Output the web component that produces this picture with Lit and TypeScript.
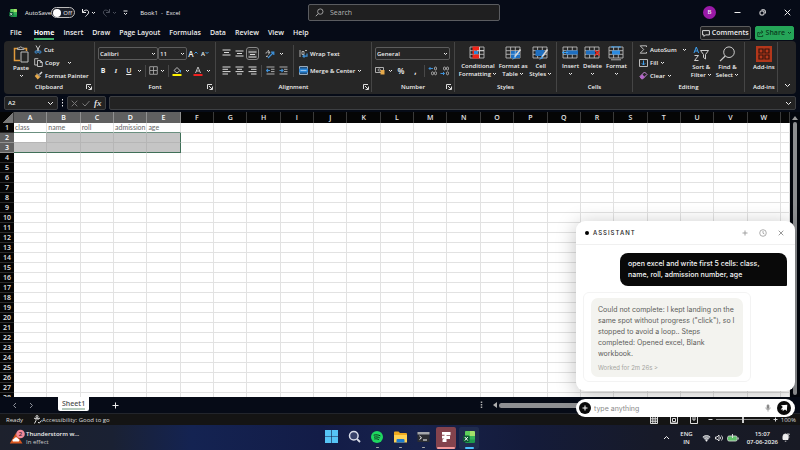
import { LitElement, html, css, svg, nothing, TemplateResult } from "lit";
import { customElement } from "lit/decorators.js";
import { classMap } from "lit/directives/class-map.js";

const icon = (w: number, h: number, body: unknown, cls = "") => html`<svg
  class="ic ${cls}" width=${w} height=${h} viewBox="0 0 ${w} ${h}" fill="none"
  stroke="currentColor" stroke-width="1" aria-hidden="true">${body}</svg>`;

const chev = (cls = "") => icon(5, 4, svg`<path d="M1 1l1.500 1.500L4 1"/>`, cls);
const wideChev = () => icon(7, 5, svg`<path d="M1 1l2.500 2.500L6 1"/>`);
const cross = (s = 6) => icon(s, s, svg`<path d="M.7 .7L${s - 0.7} ${s - 0.7}M${s - 0.7} .7L.7 ${s - 0.7}"/>`);
const launcher = () => html`<button class="launch" aria-label="More options">${icon(6, 6, svg`<path d="M.5 5V.5H5M2 2l3 3M5.500 2.500v3h-3" stroke-width=".9"/>`)}</button>`;

const excel = (s: number) => html`<svg class="ic" width=${s} height=${s} viewBox="0 0 12 12" aria-hidden="true">
  <rect x="2" y="0" width="10" height="12" rx="1.2" fill="#1f9a4c"/><path d="M2 1.2A1.2 1.2 0 0 1 3.2 0H7v5H2z" fill="#5fcf5a"/>
  <path d="M7 0h3.800A1.200 1.200 0 0 1 12 1.200V5H7z" fill="#a4e06a"/><path d="M7 5h5v3.500H7z" fill="#35b257"/>
  <rect x="0" y="4.500" width="6.500" height="6.500" rx="1" fill="#0c5a32"/><path d="M1.800 6l3 3.600M4.800 6l-3 3.600" stroke="#fff" stroke-width="1"/></svg>`;

const lines = (ys: number[], ws: [number, number][]) =>
  icon(9, 9, svg`${ys.map((y, i) => svg`<path d="M${ws[i][0]} ${y}H${ws[i][1]}" stroke-width=".9"/>`)}`);

const gridIcon = (extra: unknown, w = 17, h = 15) =>
  icon(w, h, svg`<path d="M1 1h14v11H1zM1 4.700h14M1 8.300h14M5.600 1v11M10.300 1v11" stroke="#b8b8b8" stroke-width=".9"/>${extra}`);

const paste = icon(16, 17, svg`<path d="M5 2.500H1.500v12H7M11 2.500h2.500V5" stroke="#e09a3c" stroke-width="1.500"/><path d="M4.500 3.500V2h2a1.200 1.200 0 0 1 2.400 0h2v1.500z" stroke="#bbb" stroke-width=".9"/><path d="M8 6h7v10H8z" stroke="#bbb" fill="#262626"/>`);
const cut = icon(8, 9, svg`<path d="M2 .5l3 5.500M6 .5L3 6" stroke="#c8c8c8"/><circle cx="2.200" cy="7" r="1.200" stroke="#3d8fd6"/><circle cx="5.800" cy="7" r="1.200" stroke="#3d8fd6"/>`);
const copy = icon(9, 9, svg`<path d="M3 7H.7V.7h3.600" stroke="#bbb"/><path d="M3.500 2.500h3L8.300 4.300v4.200H3.500zM6.300 2.500v2h2" stroke="#ccc" stroke-width=".9"/>`);
const brush = icon(9, 9, svg`<path d="M8 1L5.500 3.500" stroke="#ddd" stroke-width="1.500"/><path d="M3 2.500L6.500 6" stroke="#ddd"/><path d="M2.800 3L.7 5l3 3.500L6 6.300z" fill="#e6a94a" stroke="none"/>`);
const borders = icon(9, 9, svg`<path d="M.7 .7h7.600v7.600H.7zM4.500 1v7M1 4.500h7" stroke="#b5b5b5" stroke-width=".8"/>`);
const fillColor = icon(10, 10, svg`<path d="M2 4.500L5 1.500 8 4.500 5 7z" stroke="#ccc" stroke-width=".9"/><path d="M8.500 4v2.500" stroke="#4a9be0"/><path d="M.5 9h9" stroke="#fff200" stroke-width="2"/>`);
const fontColor = icon(10, 10, svg`<path d="M2.500 7L5 1l2.500 6M3.300 5h3.400" stroke="#ccc" stroke-width=".9"/><path d="M.5 9h9" stroke="#f02020" stroke-width="2"/>`);
const orient = icon(10, 10, svg`<path d="M1 4.500a1.500 1.500 0 1 1 2.500 1M3 1l2 3M1 7.500l2-.5" stroke="#c4c4c4" stroke-width="1"/><path d="M3 9l5.500-5.500M8.800 6V3.200H6" stroke="#3d8fd6" stroke-width="1.200"/>`);
const indent = (flip: boolean) => icon(9, 9, svg`<path d="M.5 1h8M5 3.300h3.500M5 5.600h3.500M.5 8h8" stroke="#bbb" stroke-width=".9"/><path d=${flip ? "M.5 4.500h3.500M2.500 3l1.500 1.500L2.500 6" : "M4 4.500H.5M2 3L.5 4.500 2 6"} stroke="#3d8fd6" stroke-width="1.100"/>`);
const wrap = icon(9, 9, svg`<path d="M1 1v7M3 2.500h2v3H3zM6 1.500h2" stroke="#bbb" stroke-width=".9"/><path d="M8 4.500v2.700H4M5.500 5.700L4 7.200l1.500 1.300" stroke="#3d8fd6" stroke-width="1.200"/>`);
const merge = icon(9, 9, svg`<path d="M.5 .5h8v8h-8z" stroke="#9ab" fill="#1d4f80"/><path d="M0 2.500h9v4H0z" fill="#2c86d6" stroke="none"/><path d="M1.500 4.500h6" stroke="#bfe0ff" stroke-width=".7"/>`);
const money = icon(10, 9, svg`<path d="M.5 1.500h8v5h-8z" stroke="#bbb" stroke-width=".9"/><circle cx="4.300" cy="4" r="1.200" stroke="#bbb" stroke-width=".8"/><path d="M5.500 4h4v4.500h-4z" fill="#e6a94a" stroke="none"/>`);
const decimals = (left: boolean) => icon(10, 10, svg`<path d=${left ? "M5 2.500H1M2.500 1L1 2.500 2.500 4" : "M.5 7.500h4M3 6l1.500 1.500L3 9"} stroke="#3d8fd6" stroke-width="1"/><rect x="6.500" y="1" width="2" height="3" rx="1" stroke="#bbb" stroke-width=".8"/><rect x="6.500" y="5.800" width="2" height="3" rx="1" stroke="#bbb" stroke-width=".8"/><rect x="3.500" y=${left ? 5.8 : 1} width="2" height="3" rx="1" stroke="#bbb" stroke-width=".8"/>`);
const condFmt = gridIcon(svg`<path d="M3.500 .5h7v4h-7zM3.500 8.500h7v4h-7z" fill="#ee2418" stroke="none"/><path d="M4.500 5H9v3H4.500z" fill="#2c86d6" stroke="none"/><path d="M3.500 5h1.500v3H3.500z" fill="#ee2418" stroke="none"/><path d="M10.500 1v11M8 4.700h7" stroke="#ddd" stroke-width=".8"/>`);
const fmtTable = gridIcon(svg`<path d="M6 5h9v7H6z" fill="#1f6fc0" stroke="none"/><path d="M6 8.300h9M10.300 5v7" stroke="#9cc9f0" stroke-width=".7"/><path d="M15.500 3.500L9.500 11" stroke="#d8d8d8" stroke-width="1.600"/><path d="M9.800 10l-3 4 4.200-2z" fill="#4ba0ea" stroke="none"/>`);
const cellStyles = gridIcon(svg`<path d="M3.500 4h9v6h-9z" fill="#1f6fc0" stroke="none"/><path d="M15.500 3.500L10 11" stroke="#d8d8d8" stroke-width="1.600"/><path d="M10 10l-3 4 4.200-2z" fill="#4ba0ea" stroke="none"/>`);
const insertCells = gridIcon(svg`<path d="M4 4.500h12v4H4z" fill="#1f6fc0" stroke="none"/><path d="M6 6.500H.5M2.500 4.500l-2 2 2 2" stroke="#3fa0ee"/>`);
const deleteCells = gridIcon(svg`<path d="M2 4.500h9v4H2z" fill="#1f6fc0" stroke="none"/><path d="M11 4.500l4.500 5M15.500 4.500l-4.500 5" stroke="#ee2418" stroke-width="1.200"/>`);
const formatCells = gridIcon(svg`<path d="M4 4.500h8v4H4z" fill="#2c8be0" stroke="none"/><path d="M4 0v2M12 0v2M4 .9h8" stroke="#3fa0ee" stroke-width=".9"/><path d="M3 13.800h10" stroke="#b8b8b8" stroke-width=".9"/>`);
const sigma = icon(9, 9, svg`<path d="M7.500 2V.8H1.200L4.700 4.500 1.200 8.200h6.300V7" stroke="#ccc" stroke-width=".9"/>`);
const fillDown = icon(9, 8, svg`<path d="M.5 .5h8v7h-8z" stroke="#ccc" stroke-width=".9"/><path d="M4.500 1.500v4.500M2.800 4.300L4.500 6l1.700-1.700" stroke="#3fa0ee"/>`);
const eraser = icon(9, 9, svg`<path d="M1 5.500L5.500 1 8 3.500 3.800 7.800H2.500z" stroke="#c987d8" stroke-width="1"/><path d="M1 5.500l2.200-2.200 2.600 2.600-2 1.900H2.500z" fill="#b565c9" stroke="none"/>`);
const sortIcon = icon(17, 16, svg`<path d="M1 7L3.300 1l2.300 6M1.800 5h3" stroke="#3fa0ee"/><path d="M1.500 9.500H5.500l-4 5H5.500" stroke="#ccc"/><path d="M7.500 4.500h8l-3 4v4.500l-2-1.500v-3z" stroke="#ccc"/>`);
const findIcon = icon(17, 16, svg`<circle cx="10" cy="6.200" r="5.300" stroke="#ccc"/><path d="M6.200 10L1 15.200" stroke="#ccc" stroke-width="1.200"/>`);
const addins = icon(16, 16, svg`<path d="M0 0h16v16H0z" fill="#b3371b" stroke="none"/><path d="M3 3h4v4H3zM9 3h4v4H9zM3 9h4v4H3zM9 9h4v4H9z" stroke="#35150d" stroke-width="1.200"/>`);
const magnifier = icon(9, 9, svg`<circle cx="5.300" cy="3.600" r="2.700" stroke="#aaa" stroke-width=".9"/><path d="M3.300 5.600L.8 8.200" stroke="#aaa"/>`);

const big = (art: unknown, l1: string, l2: string | null = null, drop = true) => html`
  <button class="big">${art}<span>${l1}</span>${l2 ? html`<span>${l2}${drop ? chev("after") : nothing}</span>` : drop ? chev("under") : nothing}</button>`;

const combo = (label: string, value: string, cls: string) => html`<span class="combo ${cls}">
  <select aria-label=${label}><option>${value}</option></select>${chev()}</span>`;

const COLS = "ABCDEFGHIJKLMNOPQRSTUVW".split("");
const HEADINGS = ["class", "name", "roll", "admission", "age"];

@customElement("excel-ribbon")
export class ExcelRibbon extends LitElement {
  static styles = css`
    :host { display: grid; grid-template-columns: 91fr 121fr 156fr 83fr 102fr 76fr 112fr 33fr 18fr; grid-template-rows: minmax(0, 1fr);
      height: 53px; margin: 0 4px; background: #262626; border-radius: 4px; color: #f0f0f0;
      font: 600 6px/8px "Open Sans", "Noto Sans", sans-serif; }
    button, select { font: inherit; color: inherit; background: none; border: 0; padding: 0; margin: 0; white-space: nowrap; }
    .ic { display: block; flex: none; }
    .group { display: grid; grid-template-rows: minmax(0, 1fr) 10px; padding-top: 1px; border-right: 1px solid #454545; margin: 1px 0 2px; min-width: 0; }
    .foot { display: grid; grid-template-columns: 8px 1fr 8px; align-items: center; text-align: center; }
    .foot span { grid-column: 2; white-space: nowrap; }
    .launch { display: block; }
    .body { display: flex; min-width: 0; }
    .stack { display: flex; flex-direction: column; }
    .row { display: flex; align-items: center; height: 17px; }
    .row > button { display: flex; align-items: center; justify-content: center; }
    .big { display: flex; flex-direction: column; align-items: center; justify-content: flex-start; padding-top: 3px; }
    .big .ic:first-child { margin-bottom: 1px; }
    .big span { display: flex; align-items: center; }
    .after { margin-left: 1px; }
    .big .under { margin-top: 2px; }
    .clip { padding-left: 9px; gap: 5px; }
    .three .row { height: 13px; }
    .row .txt { gap: 2px; }
    .row .push { margin-left: 8px; }
    .combo { display: grid; align-items: center; border: 1px solid #5c5c5c; border-radius: 2px; height: 13px; box-sizing: border-box; }
    .combo > * { grid-area: 1 / 1; }
    .combo select { appearance: none; width: 100%; padding-left: 1px; outline: none; }
    .combo svg { justify-self: end; margin-right: 1px; pointer-events: none; }
    .face { flex: 60; } .size { flex: 28; }
    .font, .num { flex-direction: column; padding: 2px 4px 0 3px; }
    .tools { justify-content: space-between; }
    .tools .key { min-width: 10px; font-size: 7px; }
    .heavy { font-weight: 700; }
    .grow { min-width: 12px; }
    .letter { font-size: 8px; }
    .it { font-style: italic; font-family: "Liberation Serif", serif; }
    .un { text-decoration: underline; }
    .bar { width: 1px; height: 12px; background: #484848; }
    .align { gap: 5px; padding: 2px 6px 0 6px; }
    .align .row { gap: 4px; }
    .on { outline: 1px solid #8a8a8a; background: #3a3a3a; border-radius: 1px; outline-offset: 1px; }
    .tall { width: 1px; background: #454545; height: 32px; }
    .wide { flex: 1; }
    .wide .row { gap: 0; }
    .wide .push { margin-left: auto; margin-right: 3px; }
    .even { justify-content: space-around; padding: 0 3px; }
    .cells { justify-content: space-around; padding: 0 3px; }
    .edit { padding: 0 5px 0 6px; gap: 4px; }
    .edit .stack { flex: 1; }
    .edit .push { margin-left: auto; }
    .center { justify-content: center; }
    .fold { align-self: end; justify-self: center; padding-bottom: 6px; }
  `;

  private group(name: string, cls: string, body: TemplateResult, launch = false) {
    return html`<section class="group" aria-label=${name}><div class="body ${cls}">${body}</div>
      <div class="foot"><span>${name}</span>${launch ? launcher() : nothing}</div></section>`;
  }

  render() {
    const full: [number, number] = [0.5, 8.5];
    const mid: [number, number] = [2, 7];
    const left: [number, number] = [0.5, 6];
    const right: [number, number] = [3, 8.5];
    return html`
      ${this.group("Clipboard", "clip", html`
        ${big(paste, "Paste")}
        <div class="stack three">
          <div class="row"><button class="txt">${cut}Cut</button></div>
          <div class="row"><button class="txt">${copy}Copy</button><button class="push" aria-label="Copy options">${chev()}</button></div>
          <div class="row"><button class="txt">${brush}Format Painter</button></div>
        </div>`, true)}
      ${this.group("Font", "font", html`
        <div class="row">${combo("Font", "Calibri", "face")}${combo("Font size", "11", "size")}
          <button class="letter grow" aria-label="Increase font size">A${icon(4, 6, svg`<path d="M.5 2.500L2 1l1.500 1.500" stroke="#3fa0ee"/>`)}</button>
          <button class="grow" aria-label="Decrease font size">A${icon(4, 6, svg`<path d="M.5 1L2 2.500 3.500 1" stroke="#3fa0ee"/>`)}</button></div>
        <div class="row tools"><button class="key heavy">B</button><button class="key it">I</button><button class="key un">U</button>${chev()}
          <i class="bar"></i><button aria-label="Borders">${borders}</button>${chev()}<i class="bar"></i>
          <button aria-label="Fill colour">${fillColor}</button>${chev()}<button aria-label="Font colour">${fontColor}</button>${chev()}</div>`, true)}
      ${this.group("Alignment", "align", html`
        <div class="stack">
          <div class="row"><button aria-label="Top align">${lines([1, 3.5, 6], [full, mid, full])}</button>
            <button aria-label="Middle align">${lines([2, 4.5, 7], [full, mid, full])}</button>
            <button class="on" aria-label="Bottom align">${lines([3, 5.5, 8], [full, mid, full])}</button>
            <i></i><button aria-label="Orientation">${orient}</button>${chev()}</div>
          <div class="row"><button aria-label="Align left">${lines([1, 3.3, 5.6, 8], [full, left, full, left])}</button>
            <button aria-label="Centre">${lines([1, 3.3, 5.6, 8], [full, mid, full, mid])}</button>
            <button aria-label="Align right">${lines([1, 3.3, 5.6, 8], [full, right, full, right])}</button>
            <i class="bar"></i><button aria-label="Decrease indent">${indent(false)}</button><button aria-label="Increase indent">${indent(true)}</button></div>
        </div><i class="tall"></i>
        <div class="stack wide">
          <div class="row"><button class="txt">${wrap}Wrap Text</button></div>
          <div class="row"><button class="txt">${merge}Merge &amp; Center</button><button class="push" aria-label="Merge options">${chev()}</button></div>
        </div>`, true)}
      ${this.group("Number", "num", html`
        <div class="row">${combo("Number format", "General", "face")}</div>
        <div class="row tools"><button aria-label="Accounting format">${money}</button>${chev()}<button class="letter grow">%</button><button class="letter heavy grow" aria-label="Comma style">,</button>
          <i class="bar"></i><button aria-label="Increase decimal">${decimals(true)}</button><button aria-label="Decrease decimal">${decimals(false)}</button></div>`, true)}
      ${this.group("Styles", "even", html`${big(condFmt, "Conditional", "Formatting")}${big(fmtTable, "Format as", "Table")}${big(cellStyles, "Cell", "Styles")}`)}
      ${this.group("Cells", "cells", html`${big(insertCells, "Insert")}${big(deleteCells, "Delete")}${big(formatCells, "Format")}`)}
      ${this.group("Editing", "edit", html`
        <div class="stack three">
          <div class="row"><button class="txt">${sigma}AutoSum</button><button class="push" aria-label="AutoSum options">${chev()}</button></div>
          <div class="row"><button class="txt">${fillDown}Fill${chev()}</button></div>
          <div class="row"><button class="txt">${eraser}Clear${chev()}</button></div>
        </div>
        ${big(sortIcon, "Sort &", "Filter")}${big(findIcon, "Find &", "Select")}`)}
      ${this.group("Add-ins", "center", big(addins, "Add-ins", null, false))}
      <button class="fold" aria-label="Collapse ribbon">${wideChev()}</button>`;
  }
}

@customElement("sheet-grid")
export class SheetGrid extends LitElement {
  static styles = css`
    :host { display: grid; grid-template-columns: 1fr 10px; background: #03060d; overflow: hidden; min-height: 0; }
    table { border-spacing: 0; table-layout: fixed; width: 100%; background: #fff; }
    .rh { width: 14px; } .last { width: 9px; }
    th, td { padding: 0; box-sizing: border-box; height: 10px; overflow: hidden; white-space: nowrap; }
    th { background: #050505; color: #e4e4e4; font: 600 7px/9px "Open Sans", "Noto Sans", sans-serif; text-align: center; }
    thead th { height: 11px; line-height: 11px; border-right: 1px solid #3a3a3a; }
    tbody th { border-bottom: 1px solid #2a2a2a; }
    td { border-right: 1px solid #e2e2e2; border-bottom: 1px solid #e2e2e2; color: #666; font: 7px/9px Lato, sans-serif; padding-left: 1px; }
    thead .sel, tbody .sel { background: #606060; color: #fff; border-color: #909090; }
    .picked { background: #c5c5c5; border-color: #b6b6b6; }
    .active { background: #fff; }
    .top { border-bottom-color: #6b9080; }
    .bottom { border-bottom-color: #3f6f57; }
    .edge { border-right-color: #3f6f57; }
    .corner { background: linear-gradient(135deg, #050505 55%, #777 55%); }
    .scroll { display: flex; flex-direction: column; align-items: center; padding: 4px 0 2px; gap: 2px; color: #999; }
    .thumb { flex: 1; width: 4px; border-radius: 2px; background: #8d8f92; }
    .ic { display: block; }
  `;

  render() {
    const rows = Array.from({ length: 28 }, (_, i) => i + 1);
    return html`
      <table>
        <colgroup><col class="rh" />${COLS.map(() => html`<col />`)}<col class="last" /></colgroup>
        <thead><tr><th class="corner"></th>${COLS.map((c, i) => html`<th scope="col" class=${classMap({ sel: i < 5 })}>${c}</th>`)}<th></th></tr></thead>
        <tbody>${rows.map((r) => {
          const inSel = r === 2 || r === 3;
          return html`<tr><th scope="row" class=${classMap({ sel: inSel })}>${r}</th>
            ${COLS.map((_, c) => html`<td class=${classMap({
              picked: inSel && c < 5, active: r === 2 && c === 0, top: r === 1 && c < 5,
              bottom: r === 3 && c < 5, edge: inSel && c === 4 })}>${r === 1 ? HEADINGS[c] ?? nothing : nothing}</td>`)}<td></td></tr>`;
        })}</tbody>
      </table>
      <div class="scroll">
        ${icon(6, 4, svg`<path d="M3 0l3 4H0z" fill="currentColor" stroke="none"/>`)}
        <div class="thumb"></div>
        ${icon(6, 4, svg`<path d="M3 4l3-4H0z" fill="currentColor" stroke="none"/>`)}
      </div>`;
  }
}

@customElement("assistant-panel")
export class AssistantPanel extends LitElement {
  static styles = css`
    :host { display: flex; flex-direction: column; gap: 8px; font: 7px/11px Inter, sans-serif; color: #5d5d5a; }
    button, input { font: inherit; color: inherit; border: 0; background: none; padding: 0; margin: 0; }
    .ic { display: block; }
    .card { background: #fff; border-radius: 9px; box-shadow: 0 3px 20px rgba(0, 0, 0, .25); overflow: hidden; }
    header { display: flex; align-items: center; height: 23px; padding: 0 11px 0 9px; border-bottom: 1px solid #f0f0f0; color: #999; }
    .dot { width: 4px; height: 4px; border-radius: 50%; background: #000; margin-right: 4px; }
    h2 { flex: 1; margin: 0; font: 500 6px/8px Inter, sans-serif; letter-spacing: 1px; color: #222; }
    .acts { display: flex; align-items: center; gap: 11px; }
    .chat { padding: 8px 8px 9px 7px; display: flex; flex-direction: column; gap: 6px; }
    .chat p { margin: 0; }
    .me { align-self: flex-end; width: 151px; background: #090909; color: #f6f6f6; font-weight: 500;
      padding: 5px 8px 6px; border-radius: 8px 8px 1px 8px; }
    .bot { align-self: flex-start; border: 1px solid #f3f3f3; border-radius: 6px; padding: 5px 7px 4px; }
    .reply { width: 138px; background: #f3f3ef; border-radius: 7px; padding: 6px 7px 4px; }
    .meta { color: #a5a5a0; font-size: 6px; margin-top: 3px; display: block; }
    form { display: flex; align-items: center; height: 18px; box-sizing: border-box; padding: 0 4px 0 3px; gap: 3px; background: #fff; border-radius: 9px; }
    input { flex: 1; min-width: 0; outline: none; }
    input::placeholder { color: #8a8a8a; opacity: 1; }
    .round { display: grid; place-items: center; background: #0a0a0a; color: #fff; border-radius: 50%; width: 12px; height: 12px; }
    .send { width: 14px; height: 14px; margin-left: 3px; }
    .mic { color: #888; }
  `;

  render() {
    return html`
      <div class="card">
        <header><i class="dot"></i><h2>ASSISTANT</h2>
          <div class="acts">
            <button aria-label="New chat">${icon(6, 6, svg`<path d="M3 .5v5M.5 3h5" stroke-width=".9"/>`)}</button>
            <button aria-label="History">${icon(8, 8, svg`<circle cx="4" cy="4" r="3.300" stroke-width=".8"/><path d="M4 2v2.200l1.400.8" stroke-width=".8"/>`)}</button>
            <button aria-label="Close">${cross(6)}</button>
          </div>
        </header>
        <div class="chat">
          <p class="me">open excel and write first 5 cells: class, name, roll, admission number, age</p>
          <div class="bot"><div class="reply">
            <p>Could not complete: I kept landing on the same spot without progress ("click"), so I stopped to avoid a loop.. Steps completed: Opened excel, Blank workbook.</p>
            <button class="meta">Worked for 2m 26s &gt;</button>
          </div></div>
        </div>
      </div>
      <form>
        <button type="button" class="round" aria-label="Attach">${icon(6, 6, svg`<path d="M3 .5v5M.5 3h5"/>`)}</button>
        <input type="text" aria-label="Message" placeholder="type anything" />
        <button type="button" class="mic" aria-label="Dictate">${icon(6, 8, svg`<rect x="2" y=".7" width="2" height="4" rx="1" fill="currentColor" stroke-width=".6"/><path d="M.8 3.500a2.200 2.200 0 0 0 4.400 0M3 6v1.600" stroke-width=".7"/>`)}</button>
        <button type="button" class="round send" aria-label="Send">${icon(10, 10, svg`<path d="M2 2.200L8.300 1.700 7.800 8 6 6.400 3.500 8.300 4 6.500 1.700 6.500 3.800 4z" fill="currentColor" stroke="none"/>`)}</button>
      </form>`;
  }
}

@customElement("task-bar")
export class TaskBar extends LitElement {
  static styles = css`
    :host { display: grid; grid-template-columns: 1fr auto 1fr; align-items: center; height: 25px; color: #eee;
      background: linear-gradient(90deg, #1d212d 0, #1a2133 14%, #142352 24%, #131c47 40%, #17224c 52%, #141b3a 66%, #171a28 82%, #181a24 100%);
      font: 600 6px/8px "Open Sans", "Noto Sans", sans-serif; }
    button { font: inherit; color: inherit; border: 0; background: none; padding: 0; margin: 0; }
    .ic { display: block; }
    .weather { display: flex; align-items: center; gap: 1px; padding-left: 9px; text-align: left; }
    .weather span { display: block; }
    .sub { color: #ccc; font-weight: 500; }
    .apps { display: flex; gap: 3px; }
    .app { display: grid; grid-template-rows: 1fr 2px; place-items: center; width: 20px; height: 22px; border-radius: 2px; }
    .app::after { content: ""; width: 3px; height: 1px; border-radius: 1px; background: transparent; }
    .run::after { background: #aaa; }
    .hot { background: #84434d; } .hot::after { width: 18px; height: 2px; background: #f49a9c; }
    .cur { background: #202c4e; } .cur::after { width: 9px; background: #4cc2ff; height: 2px; }
    .tray { display: flex; align-items: center; justify-content: flex-end; gap: 4px; padding-right: 10px; text-align: right; }
    .lang { text-align: center; padding: 0 5px 0 6px; }
    .time { margin-left: 4px; }
  `;

  render() {
    return html`
      <button class="weather">
        ${icon(16, 17, svg`<path d="M7 4L13.500 14.500H.8z" fill="#d9571f" stroke="none"/><path d="M4 12.500a1.500 1.500 0 0 1 1-2.600 2.200 2.200 0 0 1 4.200 0 1.400 1.400 0 0 1 .5 2.600z" fill="#fff" stroke="none"/><circle cx="11.500" cy="5" r="4.300" fill="#f2899a" stroke="none"/><text x="11.500" y="7.200" font-size="6" fill="#43202a" stroke="none" text-anchor="middle">2</text>`)}
        <span><span>Thunderstorm w...</span><span class="sub">In effect</span></span>
      </button>
      <nav class="apps" aria-label="Applications">
        <button class="app" aria-label="Start">${icon(13, 13, svg`<path d="M0 0h6.200v6.200H0zM6.800 0H13v6.200H6.800zM0 6.800h6.200V13H0zM6.800 6.800H13V13H6.800z" fill="#56c4f5" stroke="none"/>`)}</button>
        <button class="app" aria-label="Search">${icon(13, 13, svg`<circle cx="5.800" cy="5.800" r="4.300" stroke="#d8dce8" stroke-width="1.500" fill="#38426a"/><path d="M9 9l3 3" stroke="#d8dce8" stroke-width="1.800"/>`)}</button>
        <button class="app run" aria-label="Music">${icon(12, 12, svg`<circle cx="6" cy="6" r="6" fill="#1ed760" stroke="none"/><path d="M2.600 4.200c2.400-.7 4.800-.4 6.800.7M3 6.200c2-.5 4-.3 5.700.6M3.300 8c1.600-.4 3.200-.2 4.600.6" stroke="#10301c"/>`)}</button>
        <button class="app run" aria-label="Files">${icon(13, 12, svg`<path d="M0 1.500A1 1 0 0 1 1 .5h3.500L6 2h6a1 1 0 0 1 1 1v8H0z" fill="#f0a91e" stroke="none"/><path d="M0 4h13v7.500H0z" fill="#ffd255" stroke="none"/><path d="M2.500 11.500V9a1 1 0 0 1 1-1h6a1 1 0 0 1 1 1v2.500z" fill="#1f7bd0" stroke="none"/>`)}</button>
        <button class="app run" aria-label="Terminal">${icon(13, 12, svg`<path d="M.5 1h12v10H.5z" fill="#2b2d33" stroke="none"/><path d="M.5 1h12v2.500H.5z" fill="#a5a7ac" stroke="none"/><path d="M2.500 5l2 1.800-2 1.800M6 9h4" stroke="#fff"/>`)}</button>
        <button class="app hot" aria-label="Assistant">${icon(12, 12, svg`<path d="M2 1h8.500v3.200H6.500V5h3.500v3H6.500v3H2.500V8.500L4.500 7.500H2V4.800h2.500V3.800H2z" fill="#fff" stroke="none"/>`)}</button>
        <button class="app cur" aria-label="Spreadsheet">${excel(12)}</button>
      </nav>
      <div class="tray">
        <button aria-label="Hidden icons">${icon(7, 5, svg`<path d="M1 4l2.500-2.500L6 4"/>`)}</button>
        <button class="lang">ENG<br />IN</button>
        ${icon(9, 8, svg`<path d="M4.500 7.500L.3 3a6 6 0 0 1 8.400 0z" fill="#8f929a" stroke="none"/><path d="M1 3a5 5 0 0 1 7 0M2.500 4.700a3 3 0 0 1 4 0" stroke="#ddd" stroke-width=".9"/><circle cx="4.500" cy="6.500" r=".9" fill="#eee" stroke="none"/>`)}
        ${icon(8, 8, svg`<path d="M.5 3h1.500L4 1v6L2 5H.5z" stroke-width=".9"/><path d="M5.300 2.800a2 2 0 0 1 0 2.400M6.500 1.500a3.500 3.500 0 0 1 0 5" stroke-width=".8"/>`)}
        ${icon(12, 8, svg`<rect x=".6" y="2" width="9.500" height="5" rx="1.500" fill="#5fc26a" stroke="#cfd3cf" stroke-width=".9"/><path d="M11.200 3.500v2M5.500 0v4" stroke="#ddd"/>`)}
        <button class="time">15:07<br />07-06-2026</button>
        ${icon(8, 9, svg`<path d="M1 6.500V3.500a2.500 2.500 0 0 1 5 0v3z" fill="#eee"/><path d="M2.800 8.200h1.500M5 1h2.500L5 4h2.500" stroke-width=".8"/>`)}
      </div>`;
  }
}

@customElement("app-root")
export class AppRoot extends LitElement {
  static styles = css`
    :host { position: relative; display: grid; grid-template-rows: 25px 16px 53px 18px minmax(0, 1fr) 16px 12px 25px; height: 100vh;
      overflow: hidden; background: #060b17; color: #eee; font: 600 6px/8px "Open Sans", "Noto Sans", sans-serif; }
    button, input { font: inherit; color: inherit; border: 0; background: none; padding: 0; margin: 0; white-space: nowrap; }
    .ic { display: block; flex: none; }
    .flex { display: flex; align-items: center; }
    .title { display: grid; grid-template-columns: 308fr 192fr 300fr; align-items: center; }
    .left { padding-left: 9px; font-weight: 500; }
    .auto { display: flex; align-items: center; margin-left: 8px; }
    .toggle { appearance: none; width: 24px; height: 11px; margin: 0; border: 1px solid #bbb; border-radius: 6px; background: #1a1d26; display: flex; align-items: center; padding: 0 1px; gap: 2px; box-sizing: border-box; }
    .toggle::before { content: ""; width: 8px; height: 8px; border-radius: 50%; background: #fff; }
    .toggle::after { content: "Off"; }
    .quick { gap: 1px; margin: 0 12px 0 6px; }
    .dim { color: #4b505c; }
    .gap { margin-left: 5px; }
    .search { display: flex; align-items: center; gap: 6px; height: 17px; box-sizing: border-box; border: 1px solid #5a5c60; border-radius: 2px; background: #1f1f20; padding: 0 6px; font-weight: 400; font-size: 7px; }
    .search input { flex: 1; min-width: 0; outline: none; }
    .search input::placeholder { color: #b4b4b4; opacity: 1; }
    .win { justify-content: flex-end; gap: 18px; padding-right: 9px; }
    .avatar { width: 13px; height: 13px; border-radius: 50%; background: #9a1aa8; text-align: center; line-height: 13px; }
    .tabs { padding: 0 6px 0 10px; font-size: 7px; line-height: 10px; gap: 9px; }
    .tabs a { color: inherit; text-decoration: none; border-bottom: 1px solid transparent; }
    .tabs .here { color: #fff; font-weight: 700; border-color: #3fae68; box-shadow: 0 1px #3fae68; }
    .tabs .file { margin-right: 3px; }
    .fill { flex: 1; }
    .actions { gap: 4px; }
    .pill { display: flex; align-items: center; gap: 2px; height: 14px; border: 1px solid #5c5c5c; border-radius: 2px; background: #1f2022; padding: 0 1px; box-sizing: border-box; }
    .share { background: #25a558; border-color: #25a558; color: #0c3b20; }
    .formula { padding: 0 4px; gap: 3px; }
    .box { display: flex; align-items: center; height: 14px; box-sizing: border-box; border: 1px solid #3d3f42; border-radius: 2px; background: #232323; padding: 0 3px; }
    .name { width: 54px; }
    .box input { flex: 1; min-width: 0; outline: none; width: 0; }
    .fx { gap: 4px; color: #777; }
    .fxl { color: #ddd; font: italic 700 9px/10px "Liberation Serif", serif; }
    .sheets { padding-left: 12px; }
    .nav { gap: 12px; color: #8c9099; }
    .tab { align-self: stretch; margin: 0 23px 2px 24px; width: 31px; background: #fff; color: #555; font-size: 7px; border-radius: 0 0 2px 2px; }
    .tab span { border-bottom: 2px solid #b5cbbd; display: block; margin: 0 4px; line-height: 9px; }
    .hscroll { gap: 2px; width: 320px; color: #b0b0b0; }
    .track { flex: 1; height: 5px; border-radius: 3px; background: #8e8f92; margin-right: 10px; }
    .dots { margin-right: 8px; }
    .status { background: #141414; padding: 0 4px 0 6px; color: #dcdcdc; gap: 10px; border-top: 1px solid #22252c; font-weight: 500; }
    .views { gap: 12px; }
    .zoom { gap: 3px; }
    .zoom input { appearance: none; width: 54px; height: 1px; background: #8b8b8b; }
    .zoom input::-webkit-slider-thumb { appearance: none; width: 2px; height: 7px; background: #ccc; }
    .level { gap: 3px; }
    assistant-panel { position: absolute; right: 5px; bottom: 33px; width: 219px; }
  `;

  render() {
    const tabs = ["File", "Home", "Insert", "Draw", "Page Layout", "Formulas", "Data", "Review", "View", "Help"];
    return html`
      <header class="title">
        <div class="flex left">${excel(8)}
          <label class="auto">AutoSave <input type="checkbox" role="switch" class="toggle" /></label>
          <div class="flex quick">
            <button aria-label="Undo">${icon(9, 9, svg`<path d="M1.500 1v3.500H5M1.800 4.300C3 2 6.500 1.200 7.500 3.500 8.200 5.500 6 7 4.500 8.500"/>`)}</button>${chev()}
            <button class="dim gap" aria-label="Redo">${icon(9, 9, svg`<path d="M7.500 1v3.500H4M7.200 4.300C6 2 2.500 1.200 1.500 3.500.8 5.500 3 7 4.500 8.500"/>`)}</button>${chev("dim")}
            <button class="gap" aria-label="Customise">${icon(5, 6, svg`<path d="M.5 1h4M1 3l1.500 1.500L4 3"/>`)}</button>
          </div>
          <span>Book1&nbsp; -&nbsp; Excel</span></div>
        <label class="search">${magnifier}<input type="search" aria-label="Search" placeholder="Search" /></label>
        <div class="flex win"><button class="avatar" aria-label="Account">B</button>
          <button aria-label="Minimise">${icon(7, 7, svg`<path d="M.5 3.500h6"/>`)}</button>
          <button aria-label="Restore">${icon(7, 7, svg`<rect x="1" y="2" width="4" height="4" rx="1"/><path d="M2.500 .8h2.500a1.300 1.300 0 0 1 1.300 1.300V4.500"/>`)}</button>
          <button aria-label="Close window">${cross(7)}</button></div>
      </header>
      <nav class="flex tabs">
        ${tabs.map((t) => html`<a href="#" class=${classMap({ here: t === "Home", file: t === "File" })}>${t}</a>`)}
        <span class="fill"></span>
        <div class="flex actions">
          <button class="pill">${icon(8, 7, svg`<path d="M.6 .6h6.800v4.300H3.500L2 6.400V4.900H.6z" stroke-width=".9"/>`)}Comments</button>
          <button class="pill share">${icon(7, 7, svg`<path d="M2.500 2.500H.7v4h5V5M2.500 4.500C2.700 3 3.500 2 5 2M4 .6L6 2 4.300 3.600" stroke-width=".8"/>`)}Share${chev()}</button>
        </div>
      </nav>
      <excel-ribbon></excel-ribbon>
      <div class="flex formula">
        <label class="box name"><input type="text" aria-label="Name box" value="A2" />${wideChev()}</label>
        ${icon(3, 8, svg`<path d="M1.500 0v8" stroke-dasharray="1.500 1.500"/>`)}
        <div class="box fx">${cross(7)}${icon(8, 7, svg`<path d="M.5 3.500L3 6l4.500-5"/>`)}<button class="fxl">fx</button></div>
        <label class="box fill"><input type="text" aria-label="Formula bar" />${wideChev()}</label>
      </div>
      <sheet-grid></sheet-grid>
      <div class="flex sheets">
        <div class="flex nav"><button aria-label="Previous sheet">${icon(5, 7, svg`<path d="M4 1L1.500 3.500 4 6"/>`)}</button>
          <button aria-label="Next sheet">${icon(5, 7, svg`<path d="M1 1l2.500 2.500L1 6"/>`)}</button></div>
        <button class="tab"><span>Sheet1</span></button>
        <button aria-label="New sheet">${icon(7, 7, svg`<path d="M3.500 .5v6M.5 3.500h6"/>`)}</button>
        <span class="fill"></span>
        <div class="flex hscroll">${icon(3, 8, svg`<path d="M1.500 0.500v7" stroke-width="1.500" stroke-dasharray="1.500 1"/>`, "dots")}
          ${icon(4, 6, svg`<path d="M4 0v6L0 3z" fill="currentColor" stroke="none"/>`)}<div class="track"></div></div>
      </div>
      <footer class="flex status">
        <span>Ready</span>
        <button class="flex">${icon(9, 9, svg`<circle cx="4" cy="1.500" r="1"/><path d="M1 3.300h6M3 3.500v2L1.500 8.500M5 3.500v1.500M5 7l1.200 1.200L8.500 5.500" />`)}Accessibility: Good to go</button>
        <span class="fill"></span>
        <div class="flex views">
          <button aria-label="Normal view">${icon(8, 8, svg`<path d="M.5 .5h7v7h-7zM.5 2.800h7M.5 5.200h7M2.800 .5v7M5.200 .5v7"/>`)}</button>
          <button aria-label="Page layout view">${icon(8, 8, svg`<path d="M.5 .5h7v7h-7zM2.500 2.500h3v3h-3zM1 7h6"/>`)}</button>
          <button aria-label="Page break view">${icon(8, 8, svg`<path d="M.5 0v7.500h7V0M3 0v4h2V0"/>`)}</button>
        </div>
        <div class="flex level">
          <div class="flex zoom"><button aria-label="Zoom out">${icon(5, 5, svg`<path d="M.5 2.500h4"/>`)}</button>
            <input type="range" aria-label="Zoom" min="0" max="100" value="50" />
            <button aria-label="Zoom in">${icon(5, 5, svg`<path d="M.5 2.500h4M2.500 .5v4"/>`)}</button></div>
          <span>100%</span>
        </div>
      </footer>
      <task-bar></task-bar>
      <assistant-panel></assistant-panel>`;
  }
}
